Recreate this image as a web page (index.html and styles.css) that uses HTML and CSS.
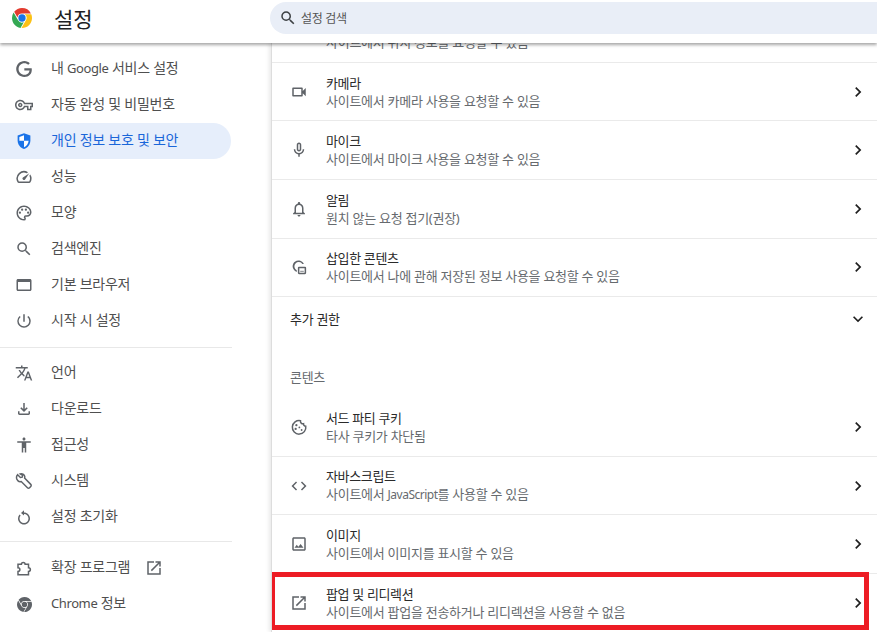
FILE: index.html
```html
<!DOCTYPE html>
<html lang="ko">
<head>
<meta charset="utf-8">
<title>설정</title>
<link rel="stylesheet" href="styles.css">
</head>
<body>
<header class="topbar">
  <div class="brand">
    <svg class="logo" viewBox="0 0 24 24"><path fill="#e33b2e" d="M12 0C8.21 0 4.831 1.757 2.632 4.501l3.953 6.848A5.454 5.454 0 0 1 12 6.545h10.691A12 12 0 0 0 12 0z"/><path fill="#34a853" d="M1.931 5.47A11.943 11.943 0 0 0 0 12c0 6.012 4.42 10.991 10.189 11.864l3.953-6.847a5.45 5.45 0 0 1-6.865-2.29z"/><path fill="#fbc116" d="M15.273 7.636a5.446 5.446 0 0 1 1.45 7.09l-5.342 9.258c.206.01.413.016.621.016 6.627 0 12-5.373 12-12 0-1.54-.29-3.011-.818-4.364z"/><circle cx="12" cy="12" r="4.4" fill="#1a73e8"/></svg>
    <h1 class="page-title">설정</h1>
  </div>
  <div class="search">
    <svg class="search-icon" viewBox="0 0 24 24"><path d="M15.5 14h-.79l-.28-.27A6.471 6.471 0 0 0 16 9.5 6.5 6.5 0 1 0 9.5 16c1.61 0 3.09-.59 4.23-1.57l.27.28v.79l5 4.99L20.49 19l-4.99-5zm-6 0C7.01 14 5 11.99 5 9.5S7.01 5 9.5 5 14 7.01 14 9.5 11.99 14 9.5 14z"/></svg>
    <span class="search-text">설정 검색</span>
  </div>
</header>
<div class="layout">
  <nav class="sidebar">
    <a class="nav-item"><span class="nav-icon"><svg class="ic-g" viewBox="0 0 24 24"><path d="M12.48 10.92v3.28h7.84c-.24 1.84-.853 3.187-1.787 4.133-1.147 1.147-2.933 2.4-6.053 2.4-4.827 0-8.6-3.893-8.6-8.72s3.773-8.72 8.6-8.72c2.6 0 4.507 1.027 5.907 2.347l2.307-2.307C18.747 1.44 16.133 0 12.48 0 5.867 0 .307 5.387.307 12s5.56 12 12.173 12c3.573 0 6.267-1.173 8.373-3.36 2.16-2.16 2.84-5.213 2.84-7.667 0-.76-.053-1.467-.173-2.053H12.48z"/></svg></span><span>내 <span class="latin">Google</span> 서비스 설정</span></a>
    <a class="nav-item"><span class="nav-icon"><svg viewBox="0 0 24 24"><path d="M22 19h-6v-4h-2.68c-1.14 2.42-3.6 4-6.32 4-3.86 0-7-3.14-7-7s3.14-7 7-7c2.72 0 5.17 1.58 6.32 4H24v6h-2v4zm-4-2h2v-4h2v-2H11.94l-.23-.67C11.01 8.34 9.11 7 7 7c-2.76 0-5 2.24-5 5s2.24 5 5 5c2.11 0 4.01-1.34 4.71-3.33l.23-.67H18v4zM7 15c-1.65 0-3-1.35-3-3s1.35-3 3-3 3 1.35 3 3-1.35 3-3 3zm0-4c-.55 0-1 .45-1 1s.45 1 1 1 1-.45 1-1-.45-1-1-1z"/></svg></span>자동 완성 및 비밀번호</a>
    <a class="nav-item active"><span class="nav-icon"><svg viewBox="0 0 24 24"><path d="M12 1.5 3.5 4.7v6.5c0 5.2 3.6 10 8.5 11.3 4.9-1.3 8.5-6.1 8.5-11.3V4.7z"/><path class="cut" d="M12 4.2 5.8 6.5V11.5H12zM12 11.5h6.2C17.8 15.4 15.4 18.9 12 20.2z"/></svg></span>개인 정보 보호 및 보안</a>
    <a class="nav-item"><span class="nav-icon"><svg viewBox="0 0 24 24"><path d="M20.38 8.57l-1.23 1.85a8 8 0 0 1-.22 7.58H5.07A8 8 0 0 1 15.58 6.85l1.85-1.23A10 10 0 0 0 3.35 19a2 2 0 0 0 1.72 1h13.85a2 2 0 0 0 1.74-1 10 10 0 0 0-.27-10.44zm-9.79 6.84a2 2 0 0 0 2.83 0l5.66-8.49-8.49 5.66a2 2 0 0 0 0 2.83z"/></svg></span>성능</a>
    <a class="nav-item"><span class="nav-icon"><svg viewBox="0 0 24 24"><path d="M12 22C6.49 22 2 17.51 2 12S6.49 2 12 2s10 4.04 10 9c0 3.31-2.69 6-6 6h-1.77c-.28 0-.5.22-.5.5 0 .12.05.23.13.33.41.47.64 1.06.64 1.67A2.5 2.5 0 0 1 12 22zm0-18c-4.41 0-8 3.59-8 8s3.59 8 8 8c.28 0 .5-.22.5-.5a.54.54 0 0 0-.14-.35c-.41-.46-.63-1.05-.63-1.65a2.5 2.5 0 0 1 2.5-2.5H16c2.21 0 4-1.79 4-4 0-3.86-3.59-7-8-7z"/><circle cx="6.5" cy="11.5" r="1.5"/><circle cx="9.5" cy="7.5" r="1.5"/><circle cx="14.5" cy="7.5" r="1.5"/><circle cx="17.5" cy="11.5" r="1.5"/></svg></span>모양</a>
    <a class="nav-item"><span class="nav-icon"><svg viewBox="0 0 24 24"><path d="M15.5 14h-.79l-.28-.27A6.471 6.471 0 0 0 16 9.5 6.5 6.5 0 1 0 9.5 16c1.61 0 3.09-.59 4.23-1.57l.27.28v.79l5 4.99L20.49 19l-4.99-5zm-6 0C7.01 14 5 11.99 5 9.5S7.01 5 9.5 5 14 7.01 14 9.5 11.99 14 9.5 14z"/></svg></span>검색엔진</a>
    <a class="nav-item"><span class="nav-icon"><svg viewBox="0 0 24 24"><path d="M20 4H4c-1.1 0-2 .9-2 2v12c0 1.1.9 2 2 2h16c1.1 0 2-.9 2-2V6c0-1.1-.9-2-2-2zm0 14H4V8h16v10z"/></svg></span>기본 브라우저</a>
    <a class="nav-item"><span class="nav-icon"><svg viewBox="0 0 24 24"><path d="M13 3h-2v10h2V3zm4.83 2.17l-1.42 1.42A6.92 6.92 0 0 1 19 12c0 3.87-3.13 7-7 7A6.995 6.995 0 0 1 7.58 6.58L6.17 5.17A8.932 8.932 0 0 0 3 12a9 9 0 0 0 18 0c0-2.74-1.23-5.18-3.17-6.83z"/></svg></span>시작 시 설정</a>
    <hr class="nav-rule">
    <a class="nav-item"><span class="nav-icon"><svg viewBox="0 0 24 24"><path d="M12.87 15.07l-2.54-2.51.03-.03A17.52 17.52 0 0 0 14.07 6H17V4h-7V2H8v2H1v1.99h11.17C11.5 7.92 10.44 9.75 9 11.35 8.07 10.32 7.3 9.19 6.69 8h-2c.73 1.63 1.73 3.17 2.98 4.56l-5.09 5.02L4 19l5-5 3.11 3.11.76-2.04zM18.5 10h-2L12 22h2l1.12-3h4.75L21 22h2l-4.5-12zm-2.62 7l1.62-4.33L19.12 17h-3.24z"/></svg></span>언어</a>
    <a class="nav-item"><span class="nav-icon"><svg viewBox="0 0 24 24"><path d="M12 16 7 11l1.4-1.45 2.6 2.6V4h2v8.15l2.6-2.6L17 11zm-6 4q-.825 0-1.413-.588T4 18v-3h2v3h12v-3h2v3q0 .825-.588 1.413T18 20z"/></svg></span>다운로드</a>
    <a class="nav-item"><span class="nav-icon"><svg viewBox="0 0 24 24"><path d="M12 2c1.1 0 2 .9 2 2s-.9 2-2 2-2-.9-2-2 .9-2 2-2zm9 7h-6v13h-2v-6h-2v6H9V9H3V7h18v2z"/></svg></span>접근성</a>
    <a class="nav-item"><span class="nav-icon"><svg viewBox="0 0 24 24"><path class="outline" d="M3.5 3.6 7.2 7.3l2.4-.4.5-2.5L7 2.5c2.5-1 5.5.8 6 3.5.1.8 0 1.5-.2 2.2L21 16.5c.8.8.8 2 0 2.8l-1.6 1.6c-.8.8-2 .8-2.8 0l-8.300-8.200C5 13.800 1.500 10.500 2 6.800c.1-1.100.7-2.300 1.500-3.200z"/></svg></span>시스템</a>
    <a class="nav-item"><span class="nav-icon"><svg viewBox="0 0 24 24"><path d="M12 6V3L8 6.5l4 3.500V8c3.310 0 6 2.690 6 6s-2.690 6-6 6-6-2.690-6-6c0-1.500.55-2.900 1.500-4L6 8.600A7.950 7.950 0 0 0 4 14c0 4.420 3.580 8 8 8s8-3.580 8-8-3.580-8-8-8z"/></svg></span>설정 초기화</a>
    <hr class="nav-rule nav-rule-lower">
    <a class="nav-item"><span class="nav-icon"><svg viewBox="0 0 24 24"><path class="outline" d="M4 7h4.500a2.500 2.500 0 0 1 5 0H18v4.500a2.500 2.500 0 0 1 0 5V21H4v-4.500a2.500 2.500 0 0 0 0-5z"/></svg></span>확장 프로그램<svg class="ext-link" viewBox="0 0 24 24"><path d="M19 19H5V5h7V3H3v18h18v-9h-2v7zM14 3v2h3.590l-9.830 9.830 1.410 1.410L19 6.410V10h2V3h-7z"/></svg></a>
    <a class="nav-item"><span class="nav-icon"><svg class="ic-chrome" viewBox="0 0 24 24"><path d="M12 0C8.210 0 4.831 1.757 2.632 4.501l3.953 6.848A5.454 5.454 0 0 1 12 6.545h10.691A12 12 0 0 0 12 0zM1.931 5.470A11.943 11.943 0 0 0 0 12c0 6.012 4.420 10.991 10.189 11.864l3.953-6.847a5.450 5.450 0 0 1-6.865-2.290zm13.342 2.166a5.446 5.446 0 0 1 1.450 7.090l-5.342 9.258c.206.01.413.016.621.016 6.627 0 12-5.373 12-12 0-1.540-.29-3.011-.818-4.364zM12 16.364a4.364 4.364 0 1 1 0-8.728 4.364 4.364 0 0 1 0 8.728Z"/></svg></span><span><span class="latin">Chrome</span> 정보</span></a>
  </nav>
  <main class="content">
    <div class="panel">
      <div class="row row-clipped"><span class="row-icon"></span><div class="row-text"><div class="row-title">위치</div><div class="row-sub">사이트에서 위치 정보를 요청할 수 있음</div></div></div>
      <div class="row"><svg class="row-icon" viewBox="0 0 24 24"><path d="M15 8v8H5V8h10m1-2H4c-.55 0-1 .45-1 1v10c0 .55.45 1 1 1h12c.55 0 1-.45 1-1v-3.5l4 4v-11l-4 4V7c0-.55-.45-1-1-1z"/></svg><div class="row-text"><div class="row-title">카메라</div><div class="row-sub">사이트에서 카메라 사용을 요청할 수 있음</div></div><svg class="chev" viewBox="0 0 24 24"><path d="M10 6 8.59 7.41 13.17 12l-4.58 4.59L10 18l6-6z"/></svg></div>
      <div class="row"><svg class="row-icon" viewBox="0 0 24 24"><path d="M12 14c1.66 0 3-1.34 3-3V5c0-1.66-1.34-3-3-3S9 3.34 9 5v6c0 1.66 1.34 3 3 3zm-1-9c0-.55.45-1 1-1s1 .45 1 1v6c0 .55-.45 1-1 1s-1-.45-1-1V5zm6 6c0 2.76-2.24 5-5 5s-5-2.24-5-5H5c0 3.53 2.61 6.43 6 6.92V21h2v-3.08c3.39-.49 6-3.39 6-6.92h-2z"/></svg><div class="row-text"><div class="row-title">마이크</div><div class="row-sub">사이트에서 마이크 사용을 요청할 수 있음</div></div><svg class="chev" viewBox="0 0 24 24"><path d="M10 6 8.59 7.41 13.17 12l-4.58 4.59L10 18l6-6z"/></svg></div>
      <div class="row"><svg class="row-icon" viewBox="0 0 24 24"><path d="M12 22c1.1 0 2-.9 2-2h-4c0 1.1.9 2 2 2zm6-6v-5c0-3.07-1.63-5.64-4.5-6.32V4c0-.83-.67-1.5-1.5-1.5s-1.5.67-1.5 1.5v.68C7.64 5.36 6 7.92 6 11v5l-2 2v1h16v-1l-2-2zm-2 1H8v-6c0-2.48 1.51-4.5 4-4.5s4 2.02 4 4.5v6z"/></svg><div class="row-text"><div class="row-title">알림</div><div class="row-sub">원치 않는 요청 접기(권장)</div></div><svg class="chev" viewBox="0 0 24 24"><path d="M10 6 8.59 7.41 13.17 12l-4.58 4.59L10 18l6-6z"/></svg></div>
      <div class="row"><svg class="row-icon" viewBox="0 0 24 24"><path d="M9 18.500A7.800 7.800 0 1 1 18.500 8h-2A5.800 5.800 0 1 0 9 16.400zM12 11.500h8a1.500 1.500 0 0 1 1.500 1.500v7a1.500 1.500 0 0 1-1.500 1.500h-8a1.500 1.500 0 0 1-1.500-1.500v-7a1.500 1.500 0 0 1 1.500-1.500zm.5 2v6h7v-6zM14 17h1.500v1.500H14zm2.500 0H18v1.500h-1.500z"/></svg><div class="row-text"><div class="row-title">삽입한 콘텐츠</div><div class="row-sub">사이트에서 나에 관해 저장된 정보 사용을 요청할 수 있음</div></div><svg class="chev" viewBox="0 0 24 24"><path d="M10 6 8.59 7.41 13.17 12l-4.58 4.59L10 18l6-6z"/></svg></div>
      <div class="row row-more"><span class="more-label">추가 권한</span><svg class="chev" viewBox="0 0 24 24"><path d="M16.59 8.59 12 13.17 7.41 8.59 6 10l6 6 6-6z"/></svg></div>
      <h2 class="section-title">콘텐츠</h2>
      <div class="row row-plain"><svg class="row-icon" viewBox="0 0 24 24"><path class="outline" d="M21 11c-1.8 0-3.2-1.5-3-3.3-2.4.5-4.4-1.5-4-4A9 9 0 1 0 21 11z"/><circle cx="8.5" cy="9.5" r="1.5"/><circle cx="7.5" cy="14.5" r="1.5"/><circle cx="12.5" cy="12.5" r="1.2"/><circle cx="15.5" cy="16" r="1.2"/></svg><div class="row-text"><div class="row-title">서드 파티 쿠키</div><div class="row-sub">타사 쿠키가 차단됨</div></div><svg class="chev" viewBox="0 0 24 24"><path d="M10 6 8.59 7.41 13.17 12l-4.58 4.59L10 18l6-6z"/></svg></div>
      <div class="row"><svg class="row-icon" viewBox="0 0 24 24"><path d="M9.4 16.6 4.8 12l4.6-4.6L8 6l-6 6 6 6 1.4-1.4zm5.2 0 4.6-4.6-4.6-4.6L16 6l6 6-6 6-1.4-1.4z"/></svg><div class="row-text"><div class="row-title">자바스크립트</div><div class="row-sub">사이트에서 <span class="latin-sub">JavaScript</span>를 사용할 수 있음</div></div><svg class="chev" viewBox="0 0 24 24"><path d="M10 6 8.59 7.41 13.17 12l-4.58 4.59L10 18l6-6z"/></svg></div>
      <div class="row"><svg class="row-icon" viewBox="0 0 24 24"><path d="M19 5v14H5V5h14m0-2H5c-1.1 0-2 .9-2 2v14c0 1.1.9 2 2 2h14c1.1 0 2-.9 2-2V5c0-1.1-.9-2-2-2zm-4.86 8.86l-3 3.87L9 13.14 6 17h12l-3.86-5.14z"/></svg><div class="row-text"><div class="row-title">이미지</div><div class="row-sub">사이트에서 이미지를 표시할 수 있음</div></div><svg class="chev" viewBox="0 0 24 24"><path d="M10 6 8.59 7.41 13.17 12l-4.58 4.59L10 18l6-6z"/></svg></div>
      <div class="row"><svg class="row-icon" viewBox="0 0 24 24"><path d="M19 19H5V5h7V3H3v18h18v-9h-2v7zM14 3v2h3.59l-9.83 9.83 1.41 1.41L19 6.41V10h2V3h-7z"/></svg><div class="row-text"><div class="row-title">팝업 및 리디렉션</div><div class="row-sub">사이트에서 팝업을 전송하거나 리디렉션을 사용할 수 없음</div></div><svg class="chev" viewBox="0 0 24 24"><path d="M10 6 8.59 7.41 13.17 12l-4.58 4.59L10 18l6-6z"/></svg></div>
    </div>
    <div class="highlight"></div>
  </main>
</div>
</body>
</html>
```
FILE: styles.css
```css
* { box-sizing: border-box; }
html, body { height: 100%; }
body {
  margin: 0;
  height: 632px;
  overflow: hidden;
  display: flex;
  flex-direction: column;
  background: #fff;
  color: #1f1f1f;
  font-family: "Noto Sans", "Noto Sans CJK KR", sans-serif;
  font-size: 13px;
}
.topbar {
  position: relative;
  z-index: 2;
  flex: none;
  height: 43px;
  display: flex;
  background: #fff;
  box-shadow: 0 2px 3px rgba(0, 0, 0, .35);
}
.brand {
  width: 270px;
  flex: none;
  display: flex;
  align-items: center;
  padding: 0 0 7px 12px;
}
.logo { width: 20px; height: 20px; flex: none; }
.page-title {
  margin: 2px 0 0 22px;
  font-size: 21px;
  line-height: 28px;
  font-weight: 400;
  color: #202124;
}
.search {
  flex: 1;
  height: 32px;
  margin-top: 2px;
  display: flex;
  align-items: center;
  padding-left: 9px;
  background: #e9eef7;
  border-radius: 16px 0 0 16px;
}
.search-icon { width: 18px; height: 18px; fill: #3c4043; flex: none; }
.search-text { margin-left: 4px; font-size: 12px; letter-spacing: -.3px; color: #555; }
.layout { flex: 1; min-height: 0; display: flex; }
.sidebar {
  width: 271px;
  flex: none;
  padding-top: 8px;
}
.nav-item {
  width: 231px;
  height: 36px;
  display: flex;
  align-items: center;
  padding: 0 0 4px 15px;
  font-size: 14px;
  letter-spacing: -.25px;
  color: #4f4f4f;
  border-radius: 0 18px 18px 0;
}
.latin { font-size: 13px; letter-spacing: -.4px; }
.latin-sub { font-size: 12px; letter-spacing: -.5px; }
.nav-icon {
  width: 18px;
  height: 18px;
  flex: none;
  margin: 4px 18px 0 0;
  display: flex;
  align-items: center;
  justify-content: center;
}
.nav-icon svg { width: 18px; height: 18px; fill: #5f6368; }
.nav-icon .ic-g { width: 16px; height: 16px; }
.nav-icon .ic-chrome { width: 15px; height: 15px; }
.nav-icon .outline { fill: none; stroke: #5f6368; stroke-width: 2; }
.active { background: #e6eefb; color: #1a66d9; }
.active .nav-icon svg { fill: #1a73e8; }
.active .nav-icon .cut { fill: #fff; }
.ext-link { width: 18px; height: 18px; margin: 4px 0 0 15px; fill: #5f6368; }
.nav-rule {
  width: 232px;
  height: 1px;
  margin: 8px 0 7px;
  border: 0;
  background: #e8e8e8;
}
.nav-rule-lower { margin: 6px 0 8px; }
.content {
  position: relative;
  flex: 1;
  min-width: 0;
  overflow: hidden;
  border-left: 1px solid #ddd;
  box-shadow: -2px 0 4px rgba(0, 0, 0, .09);
}
.panel { margin-top: -39.8px; }
.row {
  height: 58.6px;
  display: flex;
  align-items: center;
  padding: 0 9px 0 18px;
  border-top: 1px solid #eaeaea;
}
.row-clipped { border-top: 0; }
.row-icon { width: 18px; height: 18px; flex: none; margin-right: 18px; fill: #5f6368; }
.row-icon .outline { fill: none; stroke: #5f6368; stroke-width: 2; }
.row-text { flex: 1; min-width: 0; }
.row-title { font-size: 13px; line-height: 18px; letter-spacing: -.35px; color: #2a2a2a; }
.row-sub { font-size: 13px; line-height: 18px; letter-spacing: -.27px; color: #666a6e; }
.chev { width: 20px; height: 20px; flex: none; fill: #1f1f1f; }
.row-more { justify-content: space-between; height: 46px; padding-bottom: 2px; }
.more-label { font-size: 13px; letter-spacing: -.3px; color: #2a2a2a; }
.section-title {
  height: 55px;
  margin: 0;
  padding: 26px 0 0 18px;
  font-size: 13px;
  line-height: 18px;
  letter-spacing: -.3px;
  font-weight: 400;
  color: #666a6e;
}
.row-plain { border-top: 0; padding-top: 2px; }
.highlight {
  position: absolute;
  left: -2px;
  top: 529px;
  width: 599px;
  height: 58px;
  border: 5px solid #ed1c24;
}
```
